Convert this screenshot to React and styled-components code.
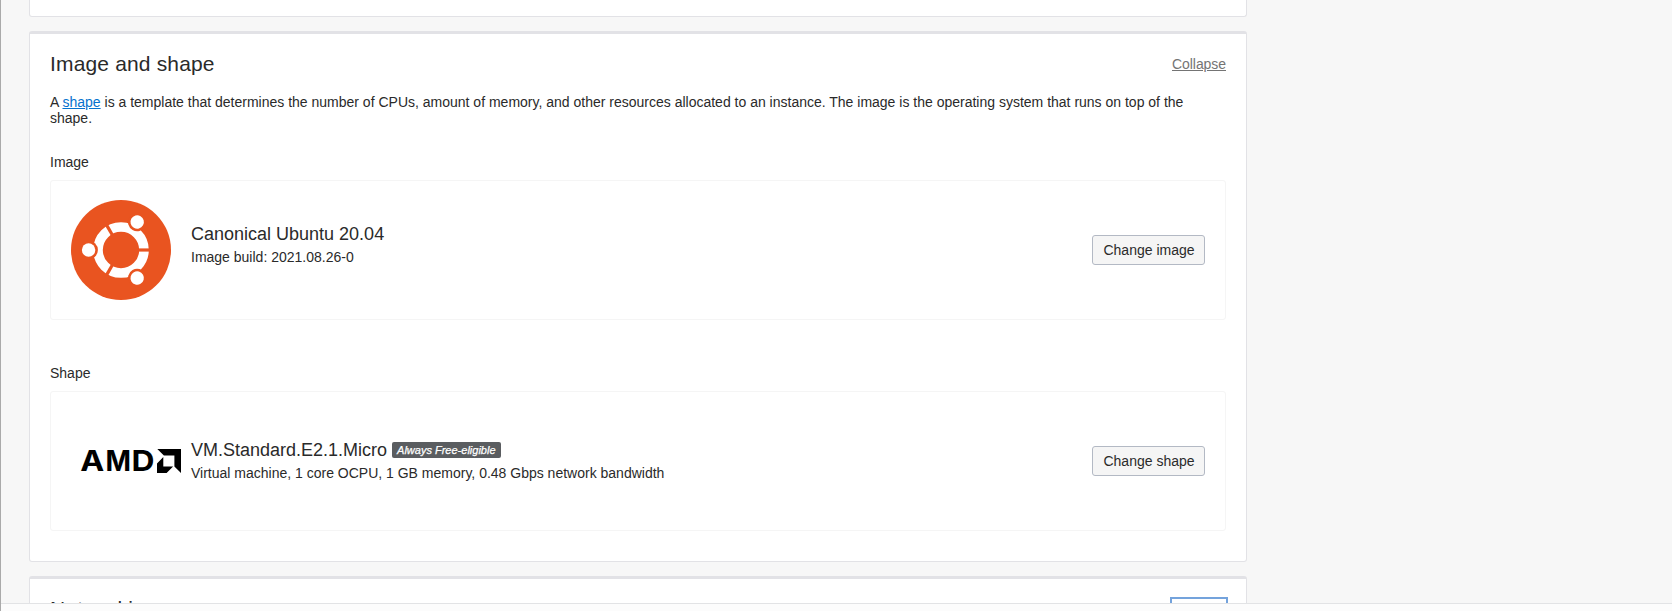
import React from "react";
import styled, { createGlobalStyle, css } from "styled-components";

const GlobalStyle = createGlobalStyle`
  * { box-sizing: border-box; }
  html, body { margin: 0; padding: 0; }
  body {
    font-family: "Liberation Sans", Arial, sans-serif;
    font-size: 14px;
    line-height: 16px;
    color: #2a2a2a;
    background: #f7f7f7;
    overflow: hidden;
  }
`;

const Page = styled.div`
  display: flex;
  flex-direction: column;
  height: 611px;
  border-left: 1px solid #aaa;
  background: #f7f7f7;
`;

const Content = styled.main`
  flex: 1;
  min-height: 0;
  overflow: hidden;
  display: flex;
  flex-direction: column;
  gap: 14px;
  padding-left: 28px;
`;

const Footer = styled.footer`
  flex: none;
  height: 8px;
  border-top: 1px solid #e2e3e5;
  background: #fcfcfc;
`;

const Card = styled.section`
  flex: none;
  width: 1218px;
  height: ${(p) => p.$height}px;
  padding: 17px 20px 0;
  background: #fff;
  border: 1px solid #e2e2e6;
  border-top-width: 3px;
  border-radius: 3px;
`;

const CardEnd = styled.section`
  flex: none;
  width: 1218px;
  height: 17px;
  background: #fff;
  border: 1px solid #e2e2e6;
  border-top: 0;
  border-radius: 0 0 3px 3px;
`;

const CardHeader = styled.header`
  display: flex;
  justify-content: space-between;
  align-items: center;
  height: 26px;
`;

const Title = styled.h2`
  margin: 0;
  font-size: 21px;
  line-height: 26px;
  font-weight: 400;
  letter-spacing: 0.16px;
`;

const Toggle = styled.a`
  font-size: 14px;
  line-height: 16px;
  letter-spacing: -0.06px;
  color: #747474;
  text-decoration: underline;
  ${(p) =>
    p.$focused &&
    css`
      outline: 2px solid #74a3dc;
      outline-offset: 0;
      padding: 2px 0;
    `}
`;

const Description = styled.p`
  margin: 17px 0 0;
  width: 1150px;
`;

const TextLink = styled.a`
  color: #0572ce;
  text-decoration: underline;
`;

const FieldLabel = styled.h3`
  margin: ${(p) => p.$top}px 0 10px;
  font-size: 14px;
  line-height: 16px;
  font-weight: 400;
`;

const Panel = styled.div`
  display: flex;
  align-items: center;
  height: 140px;
  padding: 0 20px 0 20px;
  border: 1px solid #f5f5f5;
  border-radius: 3px;
`;

const LogoBox = styled.div`
  display: flex;
  flex: none;
  width: 120px;
`;

const Details = styled.div`
  flex: 1;
  padding-bottom: ${(p) => p.$lift}px;
`;

const NameLine = styled.div`
  display: flex;
  align-items: center;
  gap: 5px;
  height: 24px;
  font-size: 18px;
  line-height: 24px;
`;

const MetaLine = styled.div`
  margin-top: 3px;
  font-size: 14px;
  line-height: 16px;
`;

const Badge = styled.span`
  width: 109px;
  height: 16px;
  padding-left: 5px;
  white-space: nowrap;
  border-radius: 2px;
  background: #5a5d60;
  color: #fff;
  font-size: 11px;
  line-height: 16px;
  font-style: italic;
  -webkit-text-stroke: 0.25px #fff;
`;

const Button = styled.button`
  flex: none;
  width: 113px;
  height: 30px;
  padding: 0 0 0 1px;
  border: 1px solid #b3b9c4;
  border-radius: 3px;
  background: #f5f5f5;
  color: #2a2a2a;
  font-family: inherit;
  font-size: 14px;
  line-height: 28px;
`;

const Wordmark = styled.text`
  font-family: Inter, sans-serif;
  font-weight: 750;
  font-size: 28.5px;
`;

function UbuntuLogo() {
  return (
    <svg width="100" height="100" viewBox="-50 -50 100 100" aria-hidden="true">
      <circle r="50" fill="#e95420" />
      <circle r="23" fill="none" stroke="#fff" strokeWidth="9.6" />
      {[0, 120, 240].map((angle) => (
        <g key={angle} transform={`rotate(${angle})`}>
          <path d="M17 0H29" stroke="#e95420" strokeWidth="3.2" />
          <circle cx="-32.4" r="9.3" fill="#e95420" />
          <circle cx="-32.4" r="6.7" fill="#fff" />
        </g>
      ))}
    </svg>
  );
}

function AmdLogo() {
  return (
    <svg width="120" height="30" viewBox="71 446 120 30">
      <Wordmark x="80.3" y="471.4" textLength="24" lengthAdjust="spacingAndGlyphs">
        A
      </Wordmark>
      <Wordmark x="105.5" y="471.4" textLength="25.5" lengthAdjust="spacingAndGlyphs">
        M
      </Wordmark>
      <Wordmark x="131.5" y="471.4" textLength="23" lengthAdjust="spacingAndGlyphs">
        D
      </Wordmark>
      <path d="M157.3 449h23.7v24l-6.6-6.6V455.6h-10.5z" />
      <path d="M163.3 457v9.6h9.8l-6.5 6.4h-9.6v-9.6z" />
    </svg>
  );
}

export default function App() {
  return (
    <>
      <GlobalStyle />
      <Page>
        <Content>
          <CardEnd />
          <Card $height={531}>
            <CardHeader>
              <Title>Image and shape</Title>
              <Toggle>Collapse</Toggle>
            </CardHeader>
            <Description>
              A <TextLink>shape</TextLink> is a template that determines the number of CPUs, amount
              of memory, and other resources allocated to an instance. The image is the operating
              system that runs on top of the shape.
            </Description>
            <FieldLabel $top={28}>Image</FieldLabel>
            <Panel>
              <LogoBox>
                <UbuntuLogo />
              </LogoBox>
              <Details $lift={14}>
                <NameLine>Canonical Ubuntu 20.04</NameLine>
                <MetaLine>Image build: 2021.08.26-0</MetaLine>
              </Details>
              <Button>Change image</Button>
            </Panel>
            <FieldLabel $top={45}>Shape</FieldLabel>
            <Panel>
              <LogoBox>
                <AmdLogo />
              </LogoBox>
              <Details $lift={4}>
                <NameLine>
                  VM.Standard.E2.1.Micro <Badge>Always Free-eligible</Badge>
                </NameLine>
                <MetaLine>
                  Virtual machine, 1 core OCPU, 1 GB memory, 0.48 Gbps network bandwidth
                </MetaLine>
              </Details>
              <Button>Change shape</Button>
            </Panel>
          </Card>
          <Card $height={200}>
            <CardHeader>
              <Title>Networking</Title>
              <Toggle $focused>Collapse</Toggle>
            </CardHeader>
          </Card>
        </Content>
        <Footer />
      </Page>
    </>
  );
}
